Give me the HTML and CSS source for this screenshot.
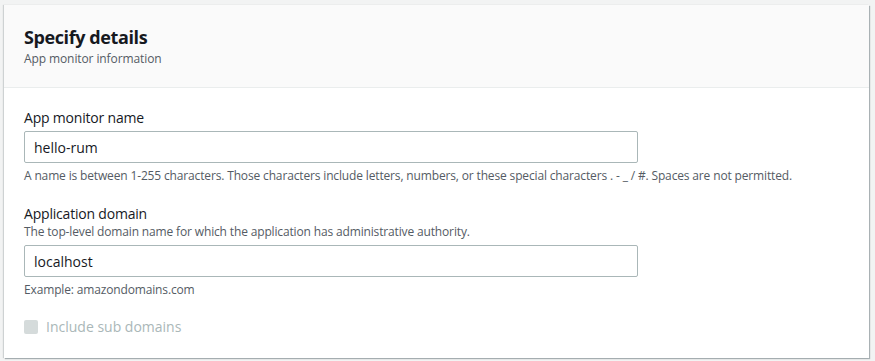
FILE: index.html
```html
<!DOCTYPE html>
<html lang="en">
<head>
    <meta charset="UTF-8">
    <meta name="viewport" content="width=device-width, initial-scale=1.0">
    <title>Specify details</title>
    <link rel="stylesheet" href="styles.css">
</head>
<body>
    <div class="container">
        <div class="container-header">
            <h2>Specify details</h2>
            <p class="header-desc">App monitor information</p>
        </div>
        <div class="container-body">
            <div class="field">
                <label for="monitorName">App monitor name</label>
                <input type="text" id="monitorName" value="hello-rum">
                <p class="hint">A name is between 1-255 characters. Those characters include letters, numbers, or these special characters . - _ / #. Spaces are not permitted.</p>
            </div>

            <div class="field">
                <label for="domain">Application domain</label>
                <p class="field-desc">The top-level domain name for which the application has administrative authority.</p>
                <input type="text" id="domain" value="localhost">
                <p class="hint">Example: amazondomains.com</p>
            </div>

            <div class="checkbox-row">
                <span class="checkbox"></span>
                <span class="checkbox-label">Include sub domains</span>
            </div>
        </div>
    </div>
</body>
</html>
```

FILE: styles.css
```css
body {
    font-family: "Open Sans", "Noto Sans", sans-serif;
    margin: 0;
    padding: 5px 6px 6px 4px;
    background-color: #f2f3f3;
    color: #16191f;
}
.container {
    background-color: #fff;
    border-radius: 0;
    box-shadow: 1px 1px 1px 0 rgba(0, 28, 36, 0.3), -1px 0 1px 0 rgba(0, 28, 36, 0.15);
}
.container-header {
    background-color: #fafafa;
    border-bottom: 1px solid #eaeded;
    padding: 20px 20px 20px;
}
.container-header h2 {
    margin: 0;
    font-size: 18px;
    line-height: 24px;
    font-weight: 700;
    letter-spacing: -0.4px;
}
.header-desc {
    margin: 2px 0 0;
    font-size: 12px;
    line-height: 16px;
    color: #545b64;
    letter-spacing: -0.1px;
}
.container-body {
    padding: 19px 20px 22px;
}
.field {
    margin-bottom: 19px;
}
label {
    display: block;
    font-size: 14px;
    line-height: 22px;
    margin-bottom: 2px;
    letter-spacing: -0.2px;
}
.field-desc {
    margin: -3px 0 5px;
    font-size: 12px;
    line-height: 16px;
    color: #545b64;
    letter-spacing: -0.15px;
}
input {
    display: block;
    width: 614px;
    height: 32px;
    box-sizing: border-box;
    padding: 4px 9px;
    border: 1px solid #aab7b8;
    border-radius: 2px;
    font-family: inherit;
    font-size: 14px;
    color: #16191f;
}
.hint {
    margin: 5px 0 0;
    font-size: 12px;
    line-height: 16px;
    color: #545b64;
    letter-spacing: -0.15px;
}
.checkbox-row {
    display: flex;
    align-items: center;
    gap: 8px;
    margin-top: 7px;
}
.checkbox {
    width: 14px;
    height: 14px;
    background-color: #d5dbdb;
    border-radius: 2px;
}
.checkbox-label {
    font-size: 14px;
    color: #aab7b8;
}
```
